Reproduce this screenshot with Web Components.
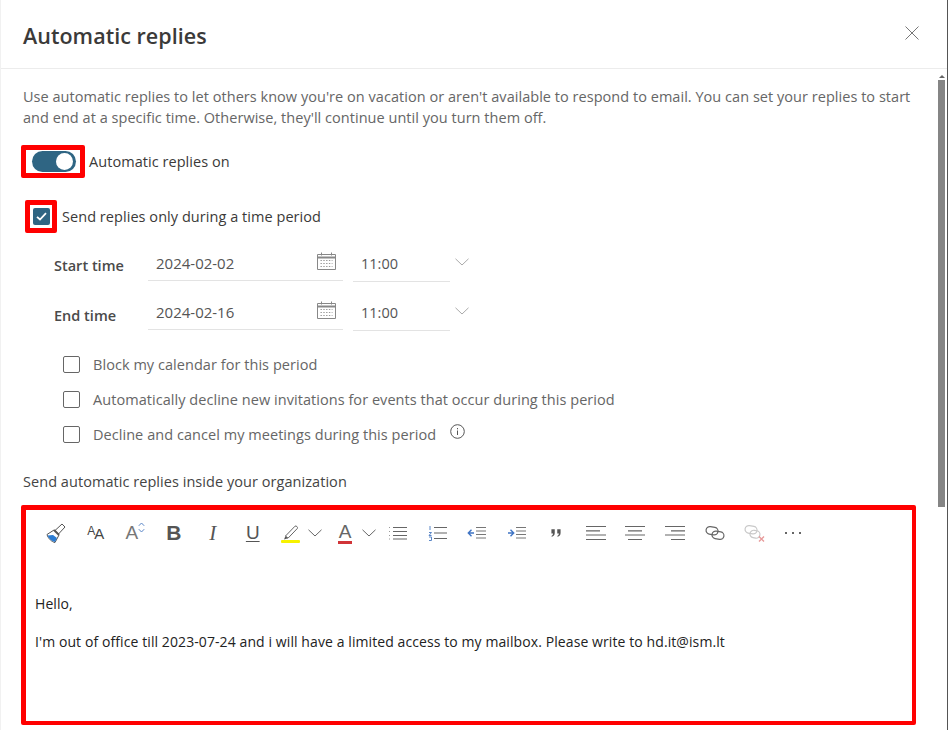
<!DOCTYPE html>
<html>
<head>
<meta charset="utf-8">
<title>Automatic replies</title>
<style>
  html, body { margin: 0; height: 100%; overflow: hidden; background: #fff; }
  body { font-family: "Open Sans", "Noto Sans", "Liberation Sans", sans-serif; font-size: 14.5px; }
</style>
</head>
<body>
<ar-dialog>
  <ar-toggle slot="toggle">Automatic replies on</ar-toggle>
  <ar-check slot="period" checked marked>Send replies only during a time period</ar-check>
  <ar-time-row slot="times" label="Start time" date="2024-02-02" time="11:00"></ar-time-row>
  <ar-time-row slot="times" label="End time" date="2024-02-16" time="11:00" style="--label-top: 9px"></ar-time-row>
  <ar-check slot="options">Block my calendar for this period</ar-check>
  <ar-check slot="options">Automatically decline new invitations for events that occur during this period</ar-check>
  <ar-check slot="options" info>Decline and cancel my meetings during this period</ar-check>
  <ar-editor slot="editor">
    <p>Hello,</p>
    <p>I'm out of office till 2023-07-24 and i will have a limited access to my mailbox. Please write to hd.it@ism.lt</p>
  </ar-editor>
</ar-dialog>

<script>
// Icons of the date row and of the editor toolbar
const line = 'fill="none" stroke="currentColor" stroke-width="1"';
const ICONS = {
  calendar: `<svg width="19" height="18" viewBox="0 0 19 18" ${line}><path d="M.5 2.500h18v15H.5z"/><path d="M.5 5.500h18" stroke-width="2"/><path d="M4.500.5v3M14.500.5v3"/><path d="M3.500 8.500h12M3.500 11.500h12M3.500 14.500h12" stroke-dasharray="1.400 1.400" stroke="#999"/></svg>`,
  chevron: `<svg width="14" height="8" viewBox="0 0 14 8" ${line}><path d="M.5.8 7 7l6.500-6.200"/></svg>`,
  info: `<svg width="15" height="15" viewBox="0 0 15 15" ${line}><circle cx="7.500" cy="7.500" r="6.800"/><path d="M7.500 6.500v4.500"/><path d="M7.500 4v1.300"/></svg>`,
  close: `<svg width="14" height="14" viewBox="0 0 14 14" ${line}><path d="M.5.5l13 13M13.500.5l-13 13"/></svg>`,
  brush: `<svg width="20" height="20" viewBox="0 0 20 20"><path d="M1 11.500 8 7l5 5-4 7.500C6 19 2 15.500 1 11.500z" fill="#fff" stroke="#555"/><path d="M1.500 12.500 7 12l4 3-2 4C6.500 18.500 3 16 1.500 12.500z" fill="#2b7cd3"/><path d="M9 7.500 16 1l3 3-6.500 7z" fill="#fff" stroke="#555"/><path d="M8 7l5 5" stroke="#555" stroke-width="2"/></svg>`,
  diamond: `<svg width="7" height="11" viewBox="0 0 7 11" fill="none" stroke="#5b87c7"><path d="M.8 3.800 3.500 1l2.700 2.800M.8 7.200 3.500 10l2.700-2.800"/></svg>`,
  marker: `<svg width="20" height="20" viewBox="0 0 20 20"><path d="M4.500 13 14 3.200c1-.9 3.300 1 2.300 2.300L7 15.200z" fill="#fff" stroke="#666"/><path d="M4.500 13 7 15.200 3 16.500z" fill="#555"/><rect x="0" y="17" width="19" height="3" rx="1" fill="#f7f200"/></svg>`,
  bullets: `<svg width="20" height="16" viewBox="0 0 20 16"><path d="M5 2.500h14M5 6.500h14M5 10.500h14M5 14h14" stroke="#666" stroke-width="1.200"/><path d="M1 2.500h2M1 6.500h2M1 10.500h2M1 14h2" stroke="#9a9a9a" stroke-dasharray="1 1"/></svg>`,
  numbers: `<svg width="20" height="16" viewBox="0 0 20 16"><path d="M6 2.500h13M6 8h13M6 13.500h13" stroke="#666" stroke-width="1.200"/><path d="M2 1v4M1 7.500h2.500L1 10.500h2.500M1 12h2.500v3.500H1" fill="none" stroke="#5b87c7"/></svg>`,
  outdent: `<svg width="20" height="14" viewBox="0 0 20 14" fill="none"><path d="M9 1.500h10M9 5h10M9 8.500h10M9 12h10" stroke="#777"/><path d="M7 7H1.500M4.500 3.800 1.300 7l3.200 3.200" stroke="#3f74c4" stroke-width="1.400"/></svg>`,
  indent: `<svg width="20" height="14" viewBox="0 0 20 14" fill="none"><path d="M9 1.500h10M9 5h10M9 8.500h10M9 12h10" stroke="#777"/><path d="M1 7h5.500M3.500 3.800 6.700 7l-3.200 3.200" stroke="#3f74c4" stroke-width="1.400"/></svg>`,
  quote: `<svg width="10" height="8" viewBox="0 0 12 9" fill="#555"><path d="M.5 0h4v4.500C4.500 7 3 8.500 1 9l-.5-1C1.700 7.500 2.400 6.500 2.500 5H.5zM7.500 0h4v4.500C11.500 7 10 8.500 8 9l-.5-1C8.700 7.500 9.400 6.500 9.500 5h-2z"/></svg>`,
  left: `<svg width="20" height="16" viewBox="0 0 20 16" stroke="#666" stroke-width="1.200"><path d="M0 1.500h20M0 5.800h14M0 10h20M0 14.500h20"/></svg>`,
  center: `<svg width="20" height="16" viewBox="0 0 20 16" stroke="#666" stroke-width="1.200"><path d="M0 1.500h20M3 5.800h14M0 10h20M3 14.500h14"/></svg>`,
  right: `<svg width="20" height="16" viewBox="0 0 20 16" stroke="#666" stroke-width="1.200"><path d="M0 1.500h20M6 5.800h14M0 10h20M6 14.500h14"/></svg>`,
  link: `<svg width="20" height="16" viewBox="0 0 20 16" fill="none" stroke="#666" stroke-width="1.200"><rect x="1" y="2" width="12" height="7.500" rx="3.700" transform="rotate(10 7 6)"/><rect x="7" y="6.500" width="12" height="7.500" rx="3.700" transform="rotate(10 13 10)"/></svg>`,
  unlink: `<svg width="21" height="18" viewBox="0 0 21 18" fill="none" stroke-width="1.200"><g stroke="#c9c9c9"><rect x="1" y="2" width="12" height="7.500" rx="3.700" transform="rotate(10 7 6)"/><rect x="6" y="6.500" width="10" height="7.500" rx="3.700" transform="rotate(10 11 10)"/></g><path d="M15 12.500l5 5M20 12.500l-5 5" stroke="#e79a9a" stroke-width="1.400"/></svg>`,
  more: `<svg width="18" height="4" viewBox="0 0 18 4" fill="#333"><circle cx="2" cy="2" r="1"/><circle cx="9" cy="2" r="1"/><circle cx="16" cy="2" r="1"/></svg>`
};

class ArDialog extends HTMLElement {
  constructor() {
    super();
    this.attachShadow({ mode: 'open' });
    this.shadowRoot.innerHTML = `
      <style>
        :host { display: flex; flex-direction: column; width: 948px; height: 730px; box-sizing: border-box; overflow: hidden;
                border-left: 1px solid #f1f1f1; border-right: 1px solid #555; color: #323130; }
        header { flex: none; display: flex; align-items: center; justify-content: space-between; box-sizing: border-box;
                 padding: 3px 28px 0 22px; border-bottom: 1px solid #ececec; height: 69px; }
        h1 { margin: 0; font-size: 21.500px; font-weight: 600; letter-spacing: .03px; color: #3b3a39; }
        button { all: unset; display: flex; color: #777; margin-top: -5px; }
        .main { flex: 1; display: flex; min-height: 0; }
        .content { flex: 1; min-width: 0; padding: 17px 0 0 22px; }
        .intro { margin: 0; width: 900px; line-height: 21px; color: #666; letter-spacing: .035px; }
        .toggle { margin: 17px 0 0 -2px; }
        .period { margin: 22px 0 0 2px; }
        .times { margin: 15px 0 0 31px; display: grid; }
        .options { margin: 1px 0 0 40px; display: grid; }
        h2 { margin: 20px 0 0; font-size: 14.500px; font-weight: 400; line-height: 20px; color: #444; letter-spacing: .05px; }
        .editor { margin: 13px 0 0 -2px; }
        .scrollbar { flex: none; width: 7px; margin-right: 2px; display: flex; flex-direction: column; }
        .arrow { height: 5px; margin-top: 6px; display: flex; justify-content: center; }
        .arrow i { width: 0; height: 0; border: 3px solid transparent; border-bottom-color: #666; border-top: 0; }
        .thumb { height: 427px; background: #858585; }
      </style>
      <header>
        <h1>Automatic replies</h1>
        <button aria-label="Close">${ICONS.close}</button>
      </header>
      <div class="main">
        <div class="content">
          <p class="intro">Use automatic replies to let others know you're on vacation or aren't available to respond to email. You can set your replies to start and end at a specific time. Otherwise, they'll continue until you turn them off.</p>
          <div class="toggle"><slot name="toggle"></slot></div>
          <div class="period"><slot name="period"></slot></div>
          <div class="times"><slot name="times"></slot></div>
          <div class="options"><slot name="options"></slot></div>
          <h2>Send automatic replies inside your organization</h2>
          <div class="editor"><slot name="editor"></slot></div>
        </div>
        <div class="scrollbar"><div class="arrow"><i></i></div><div class="thumb"></div></div>
      </div>
    `;
  }
}
customElements.define('ar-dialog', ArDialog);

class ArToggle extends HTMLElement {
  constructor() {
    super();
    this.attachShadow({ mode: 'open' });
    this.shadowRoot.innerHTML = `
      <style>
        :host { display: flex; align-items: center; gap: 4px; color: #3b3a39; letter-spacing: .05px; }
        .mark { box-sizing: border-box; width: 64px; height: 33px; border: 5px solid #f00; border-radius: 2px; display: flex; align-items: center; justify-content: center; }
        .track { width: 44px; height: 21px; margin-left: 1px; border-radius: 11px; background: #2f6583; display: flex; justify-content: flex-end; align-items: center; padding-right: 3px; box-sizing: border-box; }
        .knob { width: 17px; height: 17px; border-radius: 50%; background: #fff; }
      </style>
      <span class="mark"><span class="track"><span class="knob"></span></span></span>
      <slot></slot>
    `;
  }
}
customElements.define('ar-toggle', ArToggle);

class ArCheck extends HTMLElement {
  constructor() {
    super();
    this.attachShadow({ mode: 'open' });
    const marked = this.hasAttribute('marked');
    this.shadowRoot.innerHTML = `
      <style>
        :host { display: flex; align-items: center; letter-spacing: .05px; color: ${marked ? '#3b3a39' : '#666'}; height: ${marked ? 33 : 35}px; }
        .mark { box-sizing: border-box; width: 32px; height: 33px; border: 5px solid #f00; border-radius: 2px; display: flex; align-items: center; justify-content: center; margin-right: 5px; }
        .box { box-sizing: border-box; width: 17px; height: 17px; border-radius: 2px; display: flex; align-items: center; justify-content: center; }
        .on { background: #2f6583; }
        .off { border: 1px solid #666; margin-right: 13px; }
        .info { display: flex; margin: -6px 0 0 14px; color: #555; }
      </style>
      ${marked
        ? `<span class="mark"><span class="box on"><svg width="11" height="9" viewBox="0 0 11 9" fill="none" stroke="#fff" stroke-width="1.800"><path d="M1 4.800 4 7.500 10 1.200"/></svg></span></span>`
        : `<span class="box off"></span>`}
      <slot></slot>
      ${this.hasAttribute('info') ? `<span class="info">${ICONS.info}</span>` : ''}
    `;
  }
}
customElements.define('ar-check', ArCheck);

class ArTimeRow extends HTMLElement {
  constructor() {
    super();
    this.attachShadow({ mode: 'open' });
    this.shadowRoot.innerHTML = `
      <style>
        :host { display: flex; align-items: flex-start; height: 49px; }
        .label { width: 94px; font-weight: 600; color: #4a4a4a; line-height: 20px; padding-top: var(--label-top, 8px); }
        .date, .time { box-sizing: border-box; height: 33px; display: flex; align-items: center; border-bottom: 1px solid #e3e3e3; color: #555; justify-content: space-between; }
        .date { width: 195px; padding: 0 7px 3px 8px; font-size: 15px; }
        .time { width: 97px; margin-left: 10px; padding: 0 0 3px 8px; height: 34px; }
        .cal { display: flex; color: #888; margin-top: -3px; }
        .chev { display: flex; color: #aaa; margin: 10px 0 0 5px; }
      </style>
      <div class="label">${this.getAttribute('label')}</div>
      <div class="date"><span>${this.getAttribute('date')}</span><span class="cal">${ICONS.calendar}</span></div>
      <div class="time"><span>${this.getAttribute('time')}</span></div>
      <span class="chev">${ICONS.chevron}</span>
    `;
  }
}
customElements.define('ar-time-row', ArTimeRow);

// One toolbar button; the letters stay real text, the rest comes from ICONS
class ArTool extends HTMLElement {
  constructor() {
    super();
    this.attachShadow({ mode: 'open' });
    const name = this.getAttribute('icon');
    const wide = this.hasAttribute('menu');
    this.shadowRoot.innerHTML = `
      <style>
        :host { display: flex; align-items: center; justify-content: ${wide ? 'flex-start' : 'center'}; height: 24px; flex: none;
                box-sizing: border-box; width: ${wide ? 52 : 39.5}px; padding-left: ${wide ? 7.5 : 0}px; color: #666; }
        .g { display: flex; align-items: center; justify-content: center; width: ${wide ? '20px' : 'auto'}; }
        .chev { display: flex; color: #666; margin-left: 6.500px; }
      </style>
      <span class="g"><slot>${ICONS[name] || ''}</slot></span>
      ${wide ? `<span class="chev">${ICONS.chevron}</span>` : ''}
    `;
  }
}
customElements.define('ar-tool', ArTool);

class ArEditor extends HTMLElement {
  constructor() {
    super();
    this.attachShadow({ mode: 'open' });
    this.shadowRoot.innerHTML = `
      <style>
        :host { display: block; box-sizing: border-box; width: 895px; height: 220px; border: solid #f00; border-width: 5px 4px 4px 5px; border-radius: 2px; }
        .bar { display: flex; align-items: center; height: 24px; margin: 11px 0 0 10.500px; font-family: "Liberation Sans", sans-serif; }
        .b { font-size: 21px; font-weight: 700; color: #555; margin-right: 2px; }
        .i { font-size: 21px; font-style: italic; color: #555; font-family: "Liberation Serif", serif; margin-right: 3px; }
        .u { font-size: 19px; color: #555; text-decoration: underline; text-underline-offset: 2px; margin-right: 2px; }
        .aa { color: #444; display: flex; align-items: flex-end; }
        .aa span:first-child { font-size: 12px; margin-bottom: 4px; }
        .aa span:last-child { font-size: 15px; margin-left: -1px; }
        .grow { display: flex; align-items: flex-start; font-size: 19px; color: #777; }
        .color { font-size: 19px; color: #666; border-bottom: 3px solid #d13438; line-height: 19px; padding: 0 1px; }
        .link { margin-left: 1px; }
        .more { margin-left: -1px; }
        .body { padding: 49px 0 0 9px; font-family: "Open Sans", "Noto Sans", sans-serif; font-size: 14px; letter-spacing: .09px; color: #222; }
        ::slotted(p) { margin: 0 0 19px; line-height: 19px; }
      </style>
      <div class="bar">
        <ar-tool icon="brush"></ar-tool>
        <ar-tool><span class="aa"><span>A</span><span>A</span></span></ar-tool>
        <ar-tool><span class="grow">A${ICONS.diamond}</span></ar-tool>
        <ar-tool><span class="b">B</span></ar-tool>
        <ar-tool><span class="i">I</span></ar-tool>
        <ar-tool><span class="u">U</span></ar-tool>
        <ar-tool icon="marker" menu style="width:54px"></ar-tool>
        <ar-tool menu style="width:51px"><span class="color">A</span></ar-tool>
        <ar-tool icon="bullets"></ar-tool>
        <ar-tool icon="numbers"></ar-tool>
        <ar-tool icon="outdent"></ar-tool>
        <ar-tool icon="indent"></ar-tool>
        <ar-tool icon="quote"></ar-tool>
        <ar-tool icon="left"></ar-tool>
        <ar-tool icon="center"></ar-tool>
        <ar-tool icon="right"></ar-tool>
        <ar-tool icon="link" class="link"></ar-tool>
        <ar-tool icon="unlink"></ar-tool>
        <ar-tool icon="more" class="more"></ar-tool>
      </div>
      <div class="body"><slot></slot></div>
    `;
  }
}
customElements.define('ar-editor', ArEditor);
</script>
</body>
</html>
